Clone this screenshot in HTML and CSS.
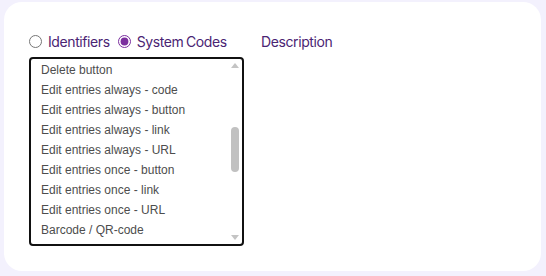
FILE: index.html
```html
<!DOCTYPE html>
<html>
<head>
<meta charset="utf-8">
<link rel="stylesheet" href="styles.css">
</head>
<body>
<div class="card">
  <div class="left">
    <div class="radios">
      <label class="opt"><input type="radio" name="mode"><span>Identifiers</span></label>
      <label class="opt"><input type="radio" name="mode" checked><span>System Codes</span></label>
    </div>
    <div class="listbox">
      <div class="items">
        <div class="item">Delete button</div>
        <div class="item">Edit entries always - code</div>
        <div class="item">Edit entries always - button</div>
        <div class="item">Edit entries always - link</div>
        <div class="item">Edit entries always - URL</div>
        <div class="item">Edit entries once - button</div>
        <div class="item">Edit entries once - link</div>
        <div class="item">Edit entries once - URL</div>
        <div class="item">Barcode / QR-code</div>
      </div>
      <div class="scrollbar">
        <div class="arrow up"></div>
        <div class="track"><div class="thumb"></div></div>
        <div class="arrow down"></div>
      </div>
    </div>
  </div>
  <div class="right">
    <div class="desc">Description</div>
  </div>
</div>
</body>
</html>
```
FILE: styles.css
```css
html, body {
  margin: 0;
  padding: 0;
}
body {
  background: #f3f1fd;
  padding: 2px 5px 5px 4px;
  width: 546px;
  height: 276px;
  box-sizing: border-box;
}
.card {
  background: #ffffff;
  border-radius: 18px;
  height: 269px;
  box-sizing: border-box;
  padding: 31px 0 0 25px;
  display: flex;
  gap: 17px;
}
.left {
  width: 215px;
  display: flex;
  flex-direction: column;
  gap: 7px;
}
.radios {
  display: flex;
  align-items: center;
  height: 17px;
  font-family: Inter, "Noto Sans", sans-serif;
  font-size: 14px;
  color: #4a2473;
  letter-spacing: -0.4px;
  word-spacing: -1px;
  white-space: nowrap;
}
.opt {
  display: flex;
  align-items: center;
}
.opt + .opt {
  margin-left: 8px;
}
.opt input {
  margin: 0 6px 0 0;
  width: 13px;
  height: 13px;
  accent-color: #7b2f9e;
}
.listbox {
  height: 189px;
  box-sizing: border-box;
  border: 2px solid #111111;
  border-radius: 4px;
  display: flex;
}
.items {
  flex: 1;
  padding: 1px 0 0 10px;
  font-family: "Liberation Sans", Arial, sans-serif;
  font-size: 12px;
  line-height: 20px;
  color: #4d4d4d;
  overflow: hidden;
}
.scrollbar {
  width: 14px;
  display: flex;
  flex-direction: column;
  align-items: center;
  padding: 4px 1px 4px 0;
  box-sizing: border-box;
}
.arrow {
  width: 0;
  height: 0;
  border-left: 4px solid transparent;
  border-right: 4px solid transparent;
}
.arrow.up {
  border-bottom: 5px solid #c4c4c4;
}
.arrow.down {
  border-top: 5px solid #c4c4c4;
}
.track {
  flex: 1;
  width: 8px;
}
.thumb {
  margin-top: 59px;
  width: 8px;
  height: 45px;
  border-radius: 4px;
  background: #c1c1c1;
}
.right {
  display: flex;
  align-items: flex-start;
}
.desc {
  height: 17px;
  line-height: 17px;
  font-family: Inter, "Noto Sans", sans-serif;
  font-size: 14px;
  color: #4a2473;
  letter-spacing: -0.4px;
}
```
